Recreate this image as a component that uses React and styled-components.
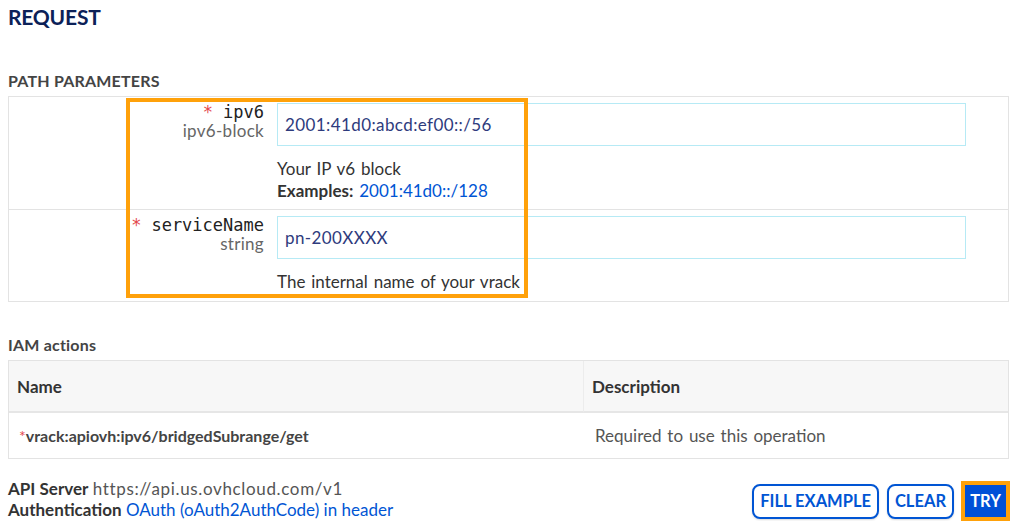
import React from "react";
import styled, { createGlobalStyle } from "styled-components";

const Global = createGlobalStyle`
  html, body { margin: 0; padding: 0; background: #fff; }
  body { font-family: Lato, "Noto Sans", sans-serif; color: #333; }
`;

const Page = styled.div`
  padding: 6px 10px 0 8px;
  width: 1002px;
  position: relative;
`;

const Title = styled.h2`
  margin: 0;
  font-size: 21px;
  font-weight: 700;
  color: #0c2158;
  line-height: 22px;
  letter-spacing: -0.2px;
`;

const SectionTitle = styled.h4`
  margin: ${p => p.$top}px 0 6px;
  font-size: 16px;
  font-weight: 700;
  color: #444;
  line-height: 18px;
  letter-spacing: 0.2px;
`;

const ParamTable = styled.div`
  position: relative;
  border: 1px solid #e3e3e3;
  margin-right: 1px;
`;

const ParamRow = styled.div`
  display: grid;
  grid-template-columns: 268px 1fr;
  padding: 6px 0 ${p => p.$bottom}px;
  & + & { border-top: 1px solid #e3e3e3; }
`;

const Label = styled.div`
  text-align: right;
  padding-right: 13px;
`;

const Name = styled.div`
  font-family: "DejaVu Sans Mono", monospace;
  font-size: 17px;
  line-height: 18px;
  color: #222;
`;

const Star = styled.span`
  color: #e4474d;
  margin-right: ${p => p.$gap}px;
  font-family: "DejaVu Sans Mono", monospace;
`;

const Type = styled.div`
  font-size: 17px;
  line-height: 19px;
  color: #666;
  letter-spacing: 0.3px;
`;

const Value = styled.div`
  display: flex;
  flex-direction: column;
`;

const Input = styled.div`
  width: 689px;
  height: 43px;
  box-sizing: border-box;
  border: 1px solid #b6eaf5;
  padding: 0 7px;
  display: flex;
  align-items: center;
  font-size: 17px;
  letter-spacing: 0.4px;
  color: #2e3b7d;
`;

const Desc = styled.div`
  margin-top: ${p => p.$top}px;
  font-size: 17px;
  line-height: 22px;
  word-spacing: 1.5px;
  color: #333;
`;

const Bold = styled.b`
  font-weight: 700;
  color: #333;
`;

const Link = styled.a`
  color: #0055d4;
  text-decoration: none;
`;

const Highlight = styled.div`
  position: absolute;
  left: 117px;
  top: 1px;
  width: 402px;
  height: 200px;
  box-sizing: border-box;
  border: 4px solid #ffa10a;
  pointer-events: none;
`;

const IamTable = styled.div`
  border: 1px solid #e3e3e3;
  margin-right: 1px;
  display: grid;
  grid-template-columns: 574px 1fr;
`;

const Th = styled.div`
  background: #f7f7f7;
  height: 50px;
  display: flex;
  align-items: center;
  padding-left: ${p => p.$pad}px;
  font-weight: 700;
  font-size: 17px;
  color: #333;
  border-bottom: 2px solid #e6e6e6;
  ${p => p.$sep && "border-left: 1px solid #ececec;"}
`;

const Td = styled.div`
  height: 45px;
  display: flex;
  align-items: center;
  padding-left: ${p => p.$pad}px;
  font-size: ${p => (p.$strong ? 16 : 17)}px;
  word-spacing: ${p => (p.$strong ? 0 : 1.5)}px;
  color: ${p => (p.$strong ? "#444" : "#555")};
  font-weight: ${p => (p.$strong ? 700 : 400)};
  ${p => p.$sep && "border-left: 1px solid #e6e6e6;"}
`;

const Req = styled.span`
  color: #e4474d;
  font-weight: 400;
`;

const Footer = styled.div`
  display: flex;
  justify-content: space-between;
  align-items: flex-start;
  margin-top: 19px;
`;

const Info = styled.div`
  font-size: 17px;
  line-height: 21px;
  color: #333;
`;

const Mutedval = styled.span`
  color: #555;
  letter-spacing: 0.65px;
`;

const Buttons = styled.div`
  display: flex;
  align-items: center;
  gap: 8px;
  margin-top: 3px;
`;

const Button = styled.button`
  font-family: Lato, "Noto Sans", sans-serif;
  font-weight: 700;
  font-size: 16.5px;
  height: 35px;
  padding: 0 6px;
  border-radius: 8px;
  border: 2px solid #0055d4;
  background: #fff;
  color: #0055d4;
  box-shadow: 0 1px 2px rgba(0,0,0,0.15);
  cursor: pointer;
`;

const TryWrap = styled.div`
  border: 4px solid #ffa10a;
  margin-left: -1px;
`;

const TryButton = styled.button`
  font-family: Lato, "Noto Sans", sans-serif;
  font-weight: 700;
  font-size: 16.5px;
  height: 32px;
  width: 41px;
  padding: 0;
  border: none;
  background: #0050d7;
  color: #fff;
  display: block;
`;

export default function App() {
  return (
    <Page>
      <Global />
      <Title>REQUEST</Title>
      <SectionTitle $top={44}>PATH PARAMETERS</SectionTitle>
      <ParamTable>
        <ParamRow $bottom={7}>
          <Label>
            <Name><Star $gap={10}>*</Star>ipv6</Name>
            <Type>ipv6-block</Type>
          </Label>
          <Value>
            <Input>2001:41d0:abcd:ef00::/56</Input>
            <Desc $top={12}>
              Your IP v6 block
              <br />
              <Bold>Examples:</Bold> <Link>2001:41d0::/128</Link>
            </Desc>
          </Value>
        </ParamRow>
        <ParamRow $bottom={8}>
          <Label>
            <Name><Star $gap={10}>*</Star>serviceName</Name>
            <Type>string</Type>
          </Label>
          <Value>
            <Input>pn-200XXXX</Input>
            <Desc $top={12}>The internal name of your vrack</Desc>
          </Value>
        </ParamRow>
        <Highlight />
      </ParamTable>
      <SectionTitle $top={34}>IAM actions</SectionTitle>
      <IamTable>
        <Th $pad={8}>Name</Th>
        <Th $pad={8} $sep>Description</Th>
        <Td $pad={10} $strong><Req>*</Req>vrack:apiovh:ipv6/bridgedSubrange/get</Td>
        <Td $pad={12}>Required to use this operation</Td>
      </IamTable>
      <Footer>
        <Info>
          <Bold>API Server</Bold> <Mutedval>https://api.us.ovhcloud.com/v1</Mutedval>
          <br />
          <Bold>Authentication</Bold> <Link>OAuth (oAuth2AuthCode) in header</Link>
        </Info>
        <Buttons>
          <Button>FILL EXAMPLE</Button>
          <Button>CLEAR</Button>
          <TryWrap>
            <TryButton>TRY</TryButton>
          </TryWrap>
        </Buttons>
      </Footer>
    </Page>
  );
}
